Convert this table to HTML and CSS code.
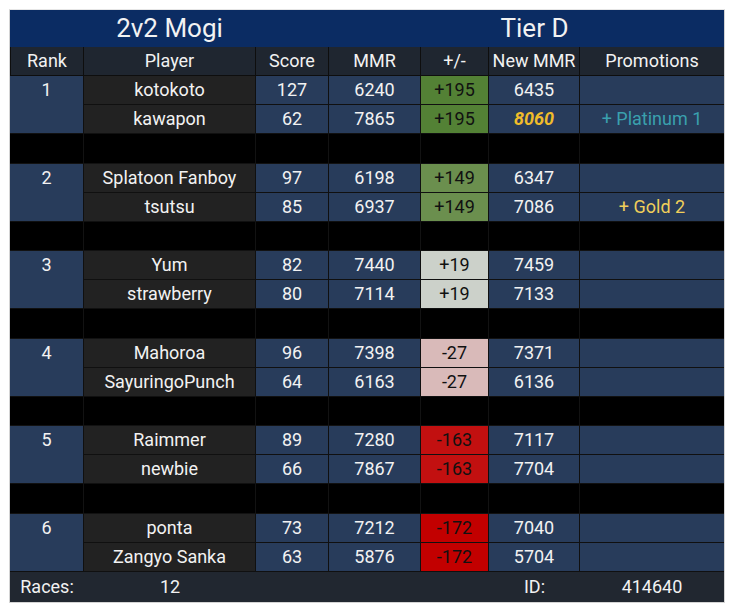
FILE: index.html
```html
<!DOCTYPE html>
<html>
<head>
<meta charset="utf-8">
<link rel="stylesheet" href="styles.css">
</head>
<body>
<div class="board">
  <div class="title">
    <div class="t-left">2v2 Mogi</div>
    <div class="t-right">Tier D</div>
  </div>
  <div class="grid head">
    <div class="c">Rank</div>
    <div class="c">Player</div>
    <div class="c">Score</div>
    <div class="c">MMR</div>
    <div class="c">+/-</div>
    <div class="c">New MMR</div>
    <div class="c last">Promotions</div>
  </div>
  <div class="grid body">
    <div class="c rank">1</div>
    <div class="c player">kotokoto</div><div class="c blue">127</div><div class="c blue">6240</div><div class="c d-g1">+195</div><div class="c blue">6435</div><div class="c blue last"></div>
    <div class="c player">kawapon</div><div class="c blue">62</div><div class="c blue">7865</div><div class="c d-g1">+195</div><div class="c blue gold-num">8060</div><div class="c blue last plat">+ Platinum 1</div>
    <div class="c sp"></div><div class="c sp"></div><div class="c sp"></div><div class="c sp"></div><div class="c sp"></div><div class="c sp"></div><div class="c sp last"></div>

    <div class="c rank">2</div>
    <div class="c player">Splatoon Fanboy</div><div class="c blue">97</div><div class="c blue">6198</div><div class="c d-g2">+149</div><div class="c blue">6347</div><div class="c blue last"></div>
    <div class="c player">tsutsu</div><div class="c blue">85</div><div class="c blue">6937</div><div class="c d-g2">+149</div><div class="c blue">7086</div><div class="c blue last goldp">+ Gold 2</div>
    <div class="c sp"></div><div class="c sp"></div><div class="c sp"></div><div class="c sp"></div><div class="c sp"></div><div class="c sp"></div><div class="c sp last"></div>

    <div class="c rank">3</div>
    <div class="c player">Yum</div><div class="c blue">82</div><div class="c blue">7440</div><div class="c d-n">+19</div><div class="c blue">7459</div><div class="c blue last"></div>
    <div class="c player">strawberry</div><div class="c blue">80</div><div class="c blue">7114</div><div class="c d-n">+19</div><div class="c blue">7133</div><div class="c blue last"></div>
    <div class="c sp"></div><div class="c sp"></div><div class="c sp"></div><div class="c sp"></div><div class="c sp"></div><div class="c sp"></div><div class="c sp last"></div>

    <div class="c rank">4</div>
    <div class="c player">Mahoroa</div><div class="c blue">96</div><div class="c blue">7398</div><div class="c d-p">-27</div><div class="c blue">7371</div><div class="c blue last"></div>
    <div class="c player">SayuringoPunch</div><div class="c blue">64</div><div class="c blue">6163</div><div class="c d-p">-27</div><div class="c blue">6136</div><div class="c blue last"></div>
    <div class="c sp"></div><div class="c sp"></div><div class="c sp"></div><div class="c sp"></div><div class="c sp"></div><div class="c sp"></div><div class="c sp last"></div>

    <div class="c rank">5</div>
    <div class="c player">Raimmer</div><div class="c blue">89</div><div class="c blue">7280</div><div class="c d-r1">-163</div><div class="c blue">7117</div><div class="c blue last"></div>
    <div class="c player">newbie</div><div class="c blue">66</div><div class="c blue">7867</div><div class="c d-r1">-163</div><div class="c blue">7704</div><div class="c blue last"></div>
    <div class="c sp"></div><div class="c sp"></div><div class="c sp"></div><div class="c sp"></div><div class="c sp"></div><div class="c sp"></div><div class="c sp last"></div>

    <div class="c rank">6</div>
    <div class="c player">ponta</div><div class="c blue">73</div><div class="c blue">7212</div><div class="c d-r2">-172</div><div class="c blue">7040</div><div class="c blue last"></div>
    <div class="c player">Zangyo Sanka</div><div class="c blue">63</div><div class="c blue">5876</div><div class="c d-r2">-172</div><div class="c blue">5704</div><div class="c blue last"></div>
  </div>
  <div class="grid foot">
    <div class="f">Races:</div>
    <div class="f">12</div>
    <div class="f"></div>
    <div class="f"></div>
    <div class="f"></div>
    <div class="f">ID:</div>
    <div class="f">414640</div>
  </div>
</div>
</body>
</html>
```
FILE: styles.css
```css
* { box-sizing: border-box; }
html, body { margin: 0; padding: 0; background: #ffffff; }
body {
  font-family: Roboto, "Liberation Sans", sans-serif;
  font-size: 18px;
  color: #f2f2f2;
  padding: 9px;
}
.board {
  width: 716px;
  border: 1px solid #d4d4d4;
  border-top-color: #e6e6e6;
}
.title {
  display: grid;
  grid-template-columns: 319px 395px;
  height: 37px;
  background: #0b2c63;
  font-size: 26px;
  line-height: 37px;
}
.t-left { text-align: center; }
.t-right { text-align: center; padding-left: 16px; }
.grid {
  display: grid;
  grid-template-columns: 74px 172px 73px 92px 68px 91px 144px;
}
.c {
  display: flex;
  align-items: center;
  justify-content: center;
  border-right: 1px solid #101010;
  border-bottom: 1px solid #101010;
  white-space: nowrap;
  padding-bottom: 1px;
}
.c.last { border-right: none; }
.head {
  height: 29px;
  background: #1f2630;
}
.head .c { border-color: #0e0e0e; }
.head .c:first-child { border-left: 1px solid #0e0e0e; }
.body {
  grid-template-rows: repeat(17, 1fr);
  height: 496px;
}
.rank {
  grid-row: span 2;
  grid-column: 1;
  background: #283c5b;
  align-items: flex-start;
  padding-top: 1px;
  line-height: 26px;
}
.player { background: #222222; }
.blue { background: #283c5b; }
.sp { background: #000000; border-color: #121212; }
.d-g1 { background: #538135; color: #111; }
.d-g2 { background: #6b8f4e; color: #111; }
.d-n { background: #ccd1ca; color: #111; }
.d-p { background: #d9bab9; color: #111; }
.d-r1 { background: #c21010; color: #111; }
.d-r2 { background: #c20000; color: #111; }
.gold-num { color: #f0bd2a; font-weight: 700; font-style: italic; }
.plat { color: #3aa0ae; }
.goldp { color: #f0cf5a; }
.foot {
  height: 30px;
  background: #212730;
}
.f {
  display: flex;
  align-items: center;
  justify-content: center;
  padding-bottom: 2px;
}
```
